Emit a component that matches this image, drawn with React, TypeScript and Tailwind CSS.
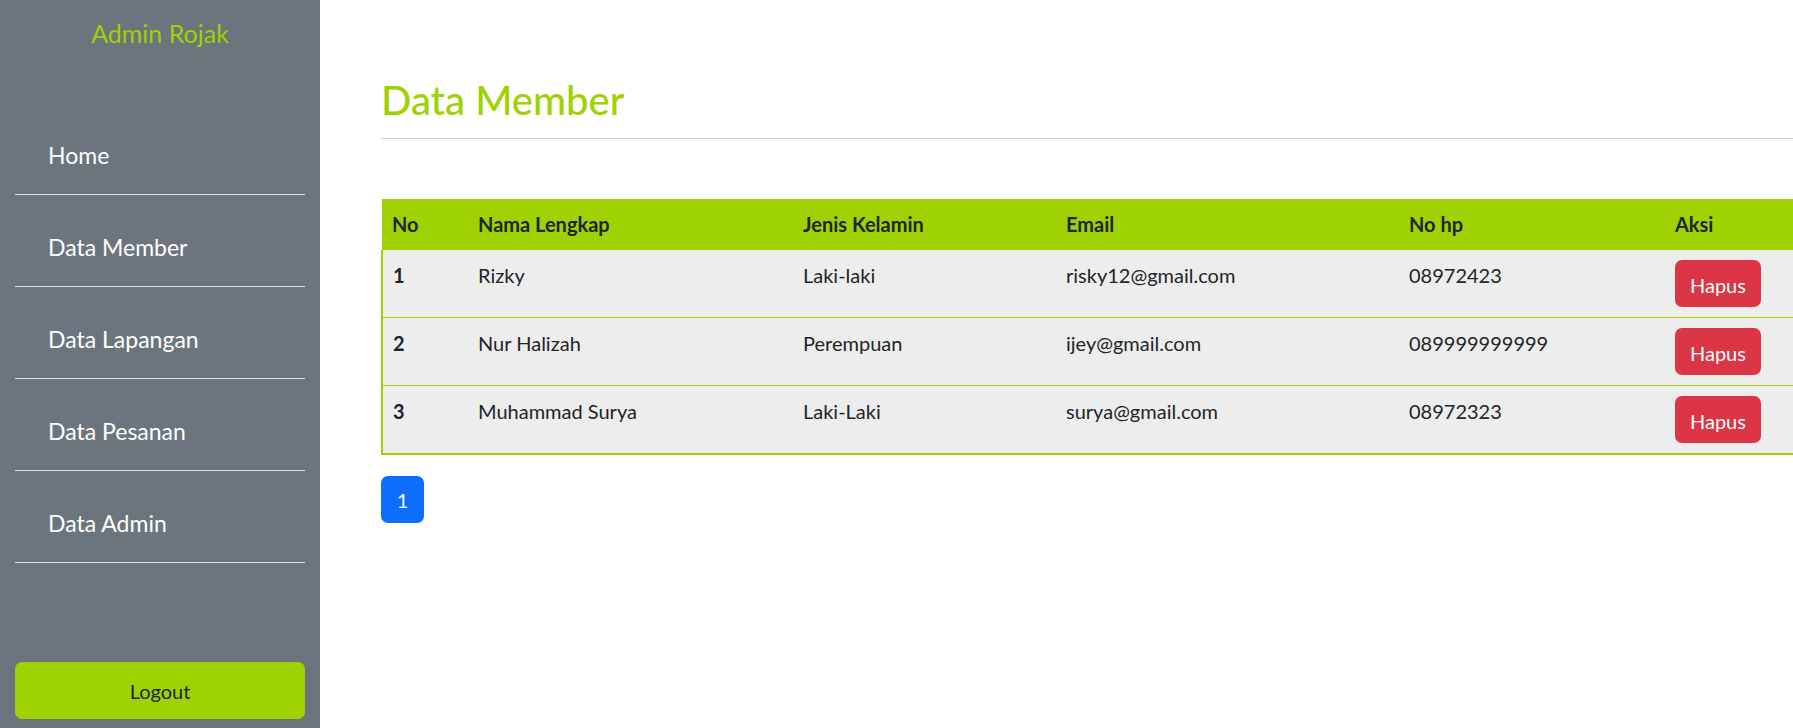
import React from "react";

const green = "#9ed202";

const members = [
  { no: 1, name: "Rizky", gender: "Laki-laki", email: "risky12@gmail.com", hp: "08972423" },
  { no: 2, name: "Nur Halizah", gender: "Perempuan", email: "ijey@gmail.com", hp: "089999999999" },
  { no: 3, name: "Muhammad Surya", gender: "Laki-Laki", email: "surya@gmail.com", hp: "08972323" },
];

const menu = ["Home", "Data Member", "Data Lapangan", "Data Pesanan", "Data Admin"];

function Sidebar() {
  return (
    <aside className="flex h-[728px] w-[320px] shrink-0 flex-col bg-[#6c757d] px-[15px] pb-[9px]">
      <h4 className="mt-[18px] text-center text-[25px] leading-[30px] text-[#9ed202]">Admin Rojak</h4>
      <ul className="mt-[92px] flex flex-col">
        {menu.map((item) => (
          <li key={item} className="border-b border-[#dee2e6] pt-[37px] first:pt-0">
            <a href="#" className="block pb-[24px] pl-[33px] text-[23px] leading-[30px] text-white">
              {item}
            </a>
          </li>
        ))}
      </ul>
      <button
        type="button"
        className="mt-auto h-[57px] w-full rounded-[7px] bg-[#9ed202] text-[20px] text-[#212529]"
      >
        Logout
      </button>
    </aside>
  );
}

export default function App() {
  return (
    <div
      className="flex h-[728px] w-[1793px] overflow-hidden bg-white text-[#212529]"
      style={{ fontFamily: "Lato, 'Liberation Sans', sans-serif" }}
    >
      <Sidebar />
      <main className="min-w-0 flex-1 pl-[61px]">
        <h2 className="mt-[76px] text-[40px] font-medium leading-[48px]" style={{ color: green }}>
          Data Member
        </h2>
        <hr className="mt-[14px] w-[1500px] border-t border-[#cfcfcf]" />
        <table className="mt-[60px] w-[1500px] table-fixed border-collapse text-[20px] leading-[30px]">
          <colgroup>
            <col className="w-[86px]" />
            <col className="w-[325px]" />
            <col className="w-[263px]" />
            <col className="w-[343px]" />
            <col className="w-[266px]" />
            <col />
          </colgroup>
          <thead>
            <tr className="bg-[#9ed202] text-left">
              {["No", "Nama Lengkap", "Jenis Kelamin", "Email", "No hp", "Aksi"].map((h) => (
                <th key={h} className="px-[10px] pb-[11px] pt-[10px] font-bold">
                  {h}
                </th>
              ))}
            </tr>
          </thead>
          <tbody className="border-b-2 border-l-2 border-[#9ed202]">
            {members.map((m) => (
              <tr key={m.no} className="border-b border-[#9ed202] bg-[#ededed] align-top">
                <td className="px-[10px] py-[10px] font-bold">{m.no}</td>
                <td className="px-[10px] py-[10px]">{m.name}</td>
                <td className="px-[10px] py-[10px]">{m.gender}</td>
                <td className="px-[10px] py-[10px]">{m.email}</td>
                <td className="px-[10px] py-[10px]">{m.hp}</td>
                <td className="px-[10px] py-[10px]">
                  <button type="button" className="h-[47px] rounded-[7px] bg-[#dc3545] px-[15px] pt-[2px] text-white">
                    Hapus
                  </button>
                </td>
              </tr>
            ))}
          </tbody>
        </table>
        <div className="mt-[21px] flex">
          <span className="flex h-[47px] w-[43px] items-center justify-center rounded-[7px] bg-[#0d6efd] text-[20px] text-white">
            1
          </span>
        </div>
      </main>
    </div>
  );
}
